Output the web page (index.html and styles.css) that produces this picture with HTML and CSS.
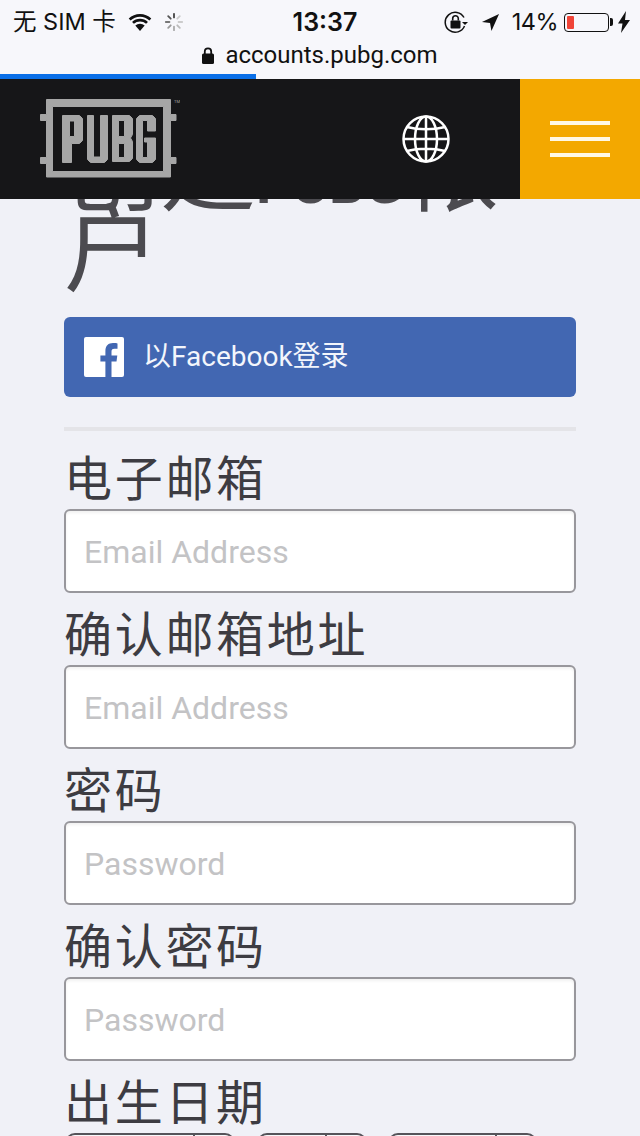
FILE: index.html
```html
<!DOCTYPE html>
<html lang="zh-CN">
<head>
<meta charset="utf-8">
<title>PUBG</title>
<link rel="stylesheet" href="styles.css">
</head>
<body>
<div class="browser-chrome">
  <div class="status-bar">
    <div class="status-left">
      <span class="carrier">无 SIM 卡</span>
      <svg class="wifi" width="24" height="18" viewBox="0 0 26 20"><path d="M1.500 7.200a16.500 16.500 0 0 1 23 0M5.200 11a11.200 11.200 0 0 1 15.600 0" fill="none" stroke="#111" stroke-width="3"/><path d="M7.800 13.800a7.800 7.800 0 0 1 10.400 0L13 20z" fill="#111"/></svg>
      <svg class="spinner" width="20" height="20" viewBox="0 0 22 22"><g stroke-width="2" stroke-linecap="round"><path d="M11 2v4" stroke="#444"/><path d="M17.400 4.600l-2.800 2.800" stroke="#ccc"/><path d="M20 11h-4" stroke="#ccc"/><path d="M17.400 17.400l-2.800-2.800" stroke="#bbb"/><path d="M11 20v-4" stroke="#aaa"/><path d="M4.600 17.400l2.800-2.800" stroke="#999"/><path d="M2 11h4" stroke="#777"/><path d="M4.600 4.600l2.800 2.800" stroke="#555"/></g></svg>
    </div>
    <div class="clock">13:37</div>
    <div class="status-right">
      <svg class="rotation" width="24" height="24" viewBox="0 0 24 24"><path d="M20 7.500A10 10 0 1 0 20.500 16" fill="none" stroke="#111" stroke-width="1.500"/><path d="M18 12h6l-3 3z" fill="#111"/><rect x="6.500" y="10.500" width="10" height="8" rx="1" fill="#111"/><path d="M8.700 10.500V8.500a2.800 2.800 0 0 1 5.600 0v2" fill="none" stroke="#111" stroke-width="1.600"/></svg>
      <svg class="location" width="19" height="19" viewBox="0 0 20 20"><path d="M19 1 1 9.500l8.500 1L11 19z" fill="#111"/></svg>
      <span class="battery-text">14%</span>
      <div class="battery"><div class="battery-level"></div></div>
      <div class="battery-cap"></div>
      <svg class="bolt" width="12" height="22" viewBox="0 0 12 22"><path d="M8 0 0 12.500h4.500L3 22l9-13H7z" fill="#111"/></svg>
    </div>
  </div>
  <div class="address-bar">
    <svg width="12" height="17" viewBox="0 0 12 17"><rect y="6.500" width="12" height="10.500" rx="1.500" fill="#111"/><path d="M2.800 7V4.500a3.200 3.200 0 0 1 6.400 0V7" fill="none" stroke="#111" stroke-width="1.800"/></svg>
    <span class="url">accounts.pubg.com</span>
  </div>
  <div class="progress"><div class="progress-fill"></div></div>
</div>

<header class="site-header">
  <svg class="logo" width="140" height="84" viewBox="0 0 140 84">
    <g fill="#a6a6a6" stroke="#a6a6a6" stroke-width="1" stroke-linejoin="round">
      <path fill-rule="evenodd" d="M6.500 2.500h124v15h5.500v6h-5.500v37h5.500v6h-5.500v13.500H6.500V66.500H.5v-6h6v-37h-6v-6h6zM12.500 9.500v65h111v-65z"/>
      <path fill-rule="evenodd" d="M22.500 18.500h17l3 3v22l-3 3h-8v19h-9zM29.500 24v15.500h5V24z"/>
      <path d="M47.500 18.500h6v41.500h7V18.500h7v44l-3 3h-14l-3-3z"/>
      <path fill-rule="evenodd" d="M72.500 18.500h17l3 3v16l-2 3.500 2 3.500v17l-3 3h-17zM78.500 23.500v16h6v-16zM78.500 46.500v14h6v-14z"/>
      <path d="M96.500 21.500l3-3h13l3 3V34h-8V23.500h-5v37h5V45h-3v-4h11v21.500l-3 3h-13l-3-3z"/>
    </g>
    <text class="logo-tm" x="134" y="6">TM</text>
  </svg>
  <div class="header-spacer"></div>
  <svg class="globe" width="50" height="50" viewBox="0 0 50 50" fill="none" stroke="#fff" stroke-width="2.500"><circle cx="25" cy="25" r="22.500"/><ellipse cx="25" cy="25" rx="11" ry="22.500"/><path d="M25 2.500v45M2.500 25h45M6 13c11 3 27 3 38 0M6 37c11-3 27-3 38 0"/></svg>
  <button class="menu-button" type="button" aria-label="menu"><span></span><span></span><span></span></button>
</header>

<main class="content">
  <h1 class="title">创建<b class="title-brand">PUBG</b>帐户</h1>
  <a class="fb-button" href="#">
    <svg width="40" height="40" viewBox="0 0 40 40"><rect width="40" height="40" rx="2" fill="#fff"/><path d="M27.500 40V24.500h5l.8-6h-5.800v-3.800c0-1.700.5-2.900 3-2.900h3V6.400c-.6-.1-2.400-.3-4.500-.3-4.500 0-7.600 2.700-7.600 7.800v4.600h-5v6h5V40z" fill="#4267b2"/></svg>
    <span class="fb-label">以Facebook登录</span>
  </a>
  <hr class="divider">
  <form class="form">
    <label class="field"><span class="field-label">电子邮箱</span><input class="field-input" type="email" placeholder="Email Address"></label>
    <label class="field"><span class="field-label">确认邮箱地址</span><input class="field-input" type="email" placeholder="Email Address"></label>
    <label class="field"><span class="field-label">密码</span><input class="field-input" type="password" placeholder="Password"></label>
    <label class="field"><span class="field-label">确认密码</span><input class="field-input" type="password" placeholder="Password"></label>
    <div class="field">
      <span class="field-label">出生日期</span>
      <div class="date-row">
        <div class="select select-month"><div class="select-arrow"></div></div>
        <div class="select select-day"><div class="select-arrow"></div></div>
        <div class="select select-year"><div class="select-arrow"></div></div>
      </div>
    </div>
  </form>
</main>
</body>
</html>
```
FILE: styles.css
```css
* { box-sizing: border-box; }
html, body { margin: 0; padding: 0; height: 1136px; overflow: hidden; background: #f0f1f7; }
body { font-family: Roboto, "Noto Sans CJK SC", sans-serif; color: #3d3c42; }

.browser-chrome { height: 79px; background: #f7f7fb; display: flex; flex-direction: column; }
.status-bar { height: 40px; padding: 4px 10px 0 13px; display: flex; align-items: center; justify-content: space-between; color: #111; }
.status-left { display: flex; align-items: center; gap: 12px; width: 260px; }
.carrier { font: 23.500px/30px Inter, "Noto Sans CJK SC", sans-serif; }
.clock { font: 600 25px/30px Inter, sans-serif; width: 80px; text-align: center; margin-left: -36px; }
.status-right { display: flex; align-items: center; justify-content: flex-end; width: 217px; }
.rotation { margin-right: 13px; margin-top: -1px; }
.location { margin-right: 12px; }
.battery-text { font: 23.500px/30px Inter, sans-serif; margin-right: 6px; letter-spacing: -.5px; }
.battery { width: 45px; height: 19px; border: 1px solid #111; border-radius: 4px; padding: 2px; }
.battery-level { width: 7px; height: 100%; background: #f04438; border-radius: 1px; }
.battery-cap { width: 3px; height: 8px; background: #111; border-radius: 0 2px 2px 0; margin: 0 5px 0 1px; }
.address-bar { height: 34px; display: flex; align-items: center; justify-content: center; gap: 11px; padding: 0 0 4px 0; }
.url { font: 24px/30px Roboto, sans-serif; color: #111; }
.progress { height: 5px; }
.progress-fill { width: 256px; height: 100%; background: #0a6fe8; }

.site-header { height: 120px; background: #161618; display: flex; align-items: center; position: relative; z-index: 2; }
.logo { margin: 0 0 0 40px; }
.logo-tm { font: 4px Roboto, sans-serif; fill: #a6a6a6; }
.header-spacer { flex: 1; }
.globe { margin-right: 69px; margin-top: -1px; }
.menu-button { width: 120px; height: 120px; background: #f3a800; border: 0; padding: 0; display: flex; flex-direction: column; align-items: center; justify-content: center; gap: 12px; }
.menu-button span { display: block; width: 60px; height: 4px; background: #fff8e6; }

.content { height: 937px; overflow: hidden; padding: 0 64px; }
.title { margin: -69px 0 0; font-size: 96px; line-height: 80px; font-weight: 400; color: #4c4b50; }
.title-brand { font-size: 56px; line-height: 0; font-weight: 700; }

.fb-button { margin-top: 27px; display: flex; align-items: center; gap: 19px; height: 80px; padding-left: 20px; background: #4267b2; border-radius: 6px; color: #f3f6fc; font-size: 28px; text-decoration: none; }
.fb-label { margin-bottom: 7px; }
.divider { margin: 30px 0 0; border: 0; height: 4px; background: #e4e4e8; }

.form { display: flex; flex-direction: column; margin-top: 20px; }
.field { display: block; height: 156px; }
.field-label { display: block; height: 58px; font-size: 48px; line-height: 58px; letter-spacing: 2.700px; color: #3d3c42; }
.field-input { display: block; width: 100%; height: 84px; padding: 2px 18px 0; background: #fff; border: 2px solid #98979c; border-radius: 6px; font: 32px Roboto, sans-serif; outline: 0; box-shadow: inset 0 2px 3px rgba(0, 0, 0, .06); }
.field-input::placeholder { color: #c3c3c5; opacity: 1; }

.date-row { display: flex; padding-left: 1px; }
.select { height: 60px; border: 2px solid #55545a; border-radius: 10px; background: #f8f8fa; display: flex; justify-content: flex-end; }
.select-arrow { width: 40px; border-left: 2px solid #55545a; }
.select-month { width: 170px; }
.select-day { width: 110px; margin-left: 22px; }
.select-year { width: 149px; margin-left: 21px; }
```
